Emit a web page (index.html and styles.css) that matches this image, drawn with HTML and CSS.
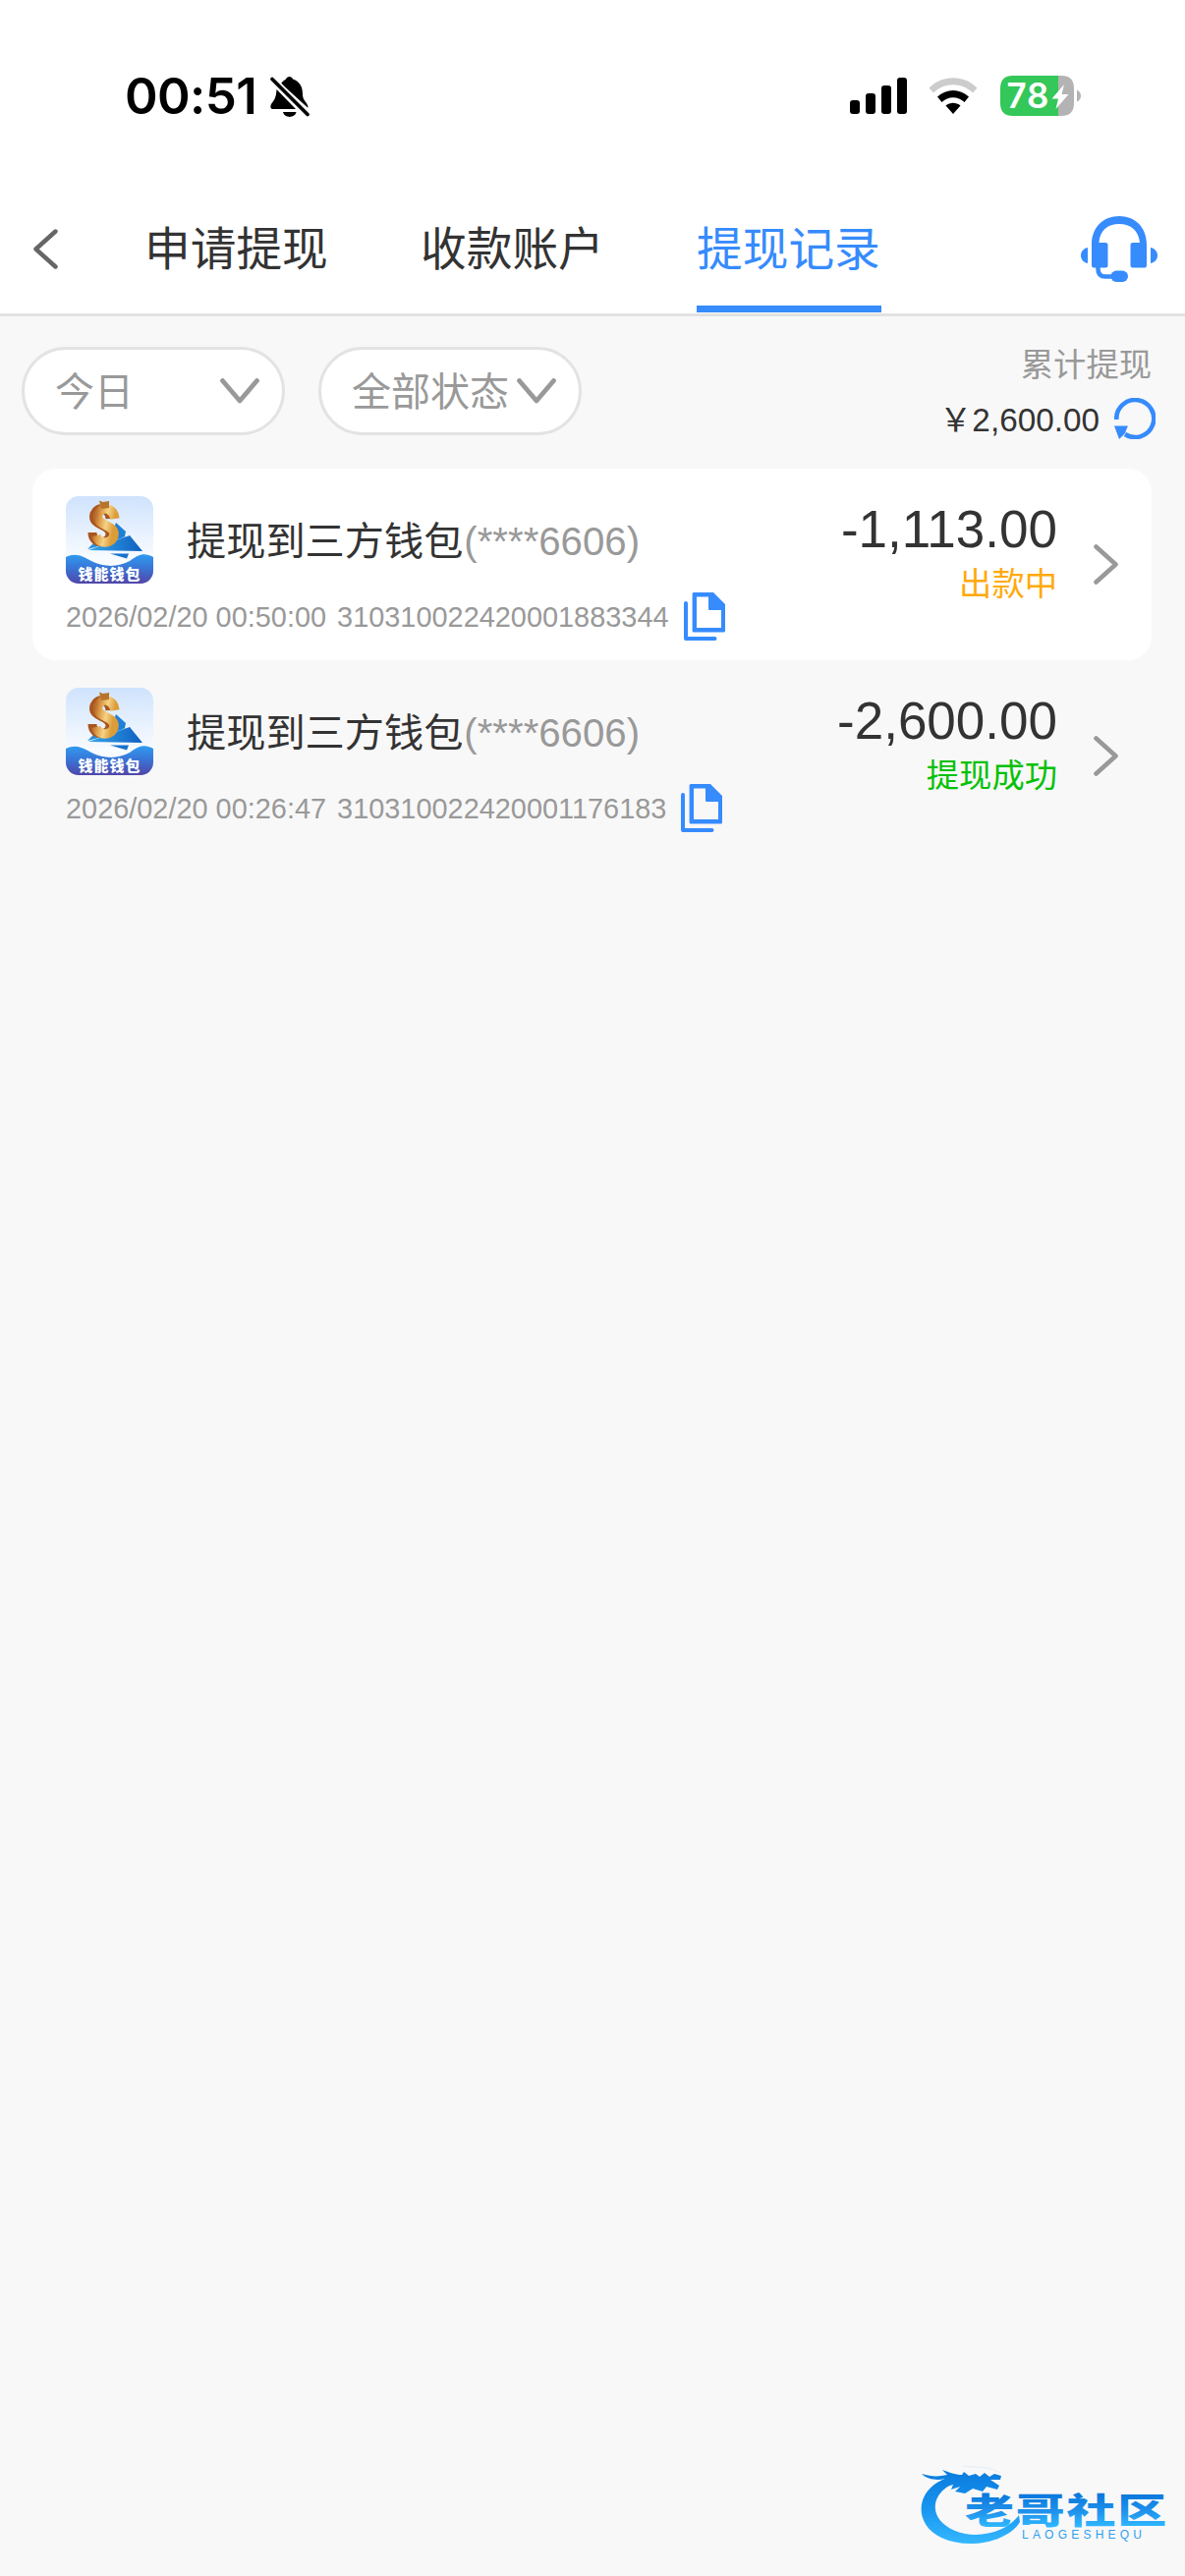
FILE: index.html
```html
<!DOCTYPE html>
<html lang="zh-CN">
<head>
  <meta charset="UTF-8">
  <title>提现记录</title>
  <link rel="stylesheet" href="styles.css">
</head>
<body>

  <!-- Shared icons -->
  <svg class="defs" width="0" height="0">
    <defs>
      <linearGradient id="sky" x1="0" y1="0" x2="0" y2="1">
        <stop offset="0" stop-color="#cfe3fd"/>
        <stop offset="0.7" stop-color="#f8fbff"/>
      </linearGradient>
      <linearGradient id="wave" x1="0" y1="0" x2="0" y2="1">
        <stop offset="0" stop-color="#2f9bf0"/>
        <stop offset="0.5" stop-color="#3a72d4"/>
        <stop offset="1" stop-color="#5146a8"/>
      </linearGradient>
      <linearGradient id="gold" x1="0" y1="0" x2="1" y2="0.3">
        <stop offset="0" stop-color="#b8692a"/>
        <stop offset="0.3" stop-color="#e0a24c"/>
        <stop offset="0.6" stop-color="#f5d286"/>
        <stop offset="1" stop-color="#dc9c38"/>
      </linearGradient>
      <linearGradient id="plane" x1="0" y1="0" x2="1" y2="0">
        <stop offset="0" stop-color="#35a6ea"/>
        <stop offset="1" stop-color="#0f5fc0"/>
      </linearGradient>
      <linearGradient id="brand" gradientUnits="userSpaceOnUse" x1="0" y1="20" x2="0" y2="100">
        <stop offset="0" stop-color="#0a78dc"/>
        <stop offset="0.5" stop-color="#1593ee"/>
        <stop offset="1" stop-color="#35b8ff"/>
      </linearGradient>
      <linearGradient id="brandText" gradientUnits="userSpaceOnUse" x1="0" y1="-31" x2="0" y2="3">
        <stop offset="0" stop-color="#0a78dc"/>
        <stop offset="0.5" stop-color="#1e90ea"/>
        <stop offset="1" stop-color="#2fb8ff"/>
      </linearGradient>
    </defs>
    <symbol id="wallet" viewBox="0 0 89 89">
      <rect width="89" height="89" fill="url(#sky)"/>
      <path d="M22 54L30 46L62 41L30 52Z" fill="#2b8fe0"/>
      <path d="M51 27L61 36L60 41L44 47Z" fill="#1f80d4"/>
      <path d="M23 55L65 40L78 56Z" fill="url(#plane)"/>
      <path d="M45 58.500L64 58.500L62 63.500Z" fill="#1673cf"/>
      <path d="M45 23C44 11 32 10 29 18C25 31 46 28 45 39C44 49 27 50 27 37" fill="none" stroke="#a9561f" stroke-width="9"/>
      <path d="M50 23C48 11 36 10 33 18C29 31 50 28 49 39C48 49 33 50 31 40" fill="none" stroke="url(#gold)" stroke-width="9.500"/>
      <path d="M34 4.500L38 6L44 5L44 12L36 13Z" fill="#b9742c"/>
      <path d="M0 62C10 57 17 61 26 66C40 73 54 72 65 66C74 59 80 57 89 62V89H0Z" fill="url(#wave)"/>
    </symbol>
    <symbol id="copy" viewBox="0 0 42 49">
      <path d="M2 11V47H31.500" fill="none" stroke="#368bfd" stroke-width="4" stroke-linecap="round" stroke-linejoin="round"/>
      <path fill-rule="evenodd" d="M10 0H30L42 12V39Q42 40.500 40.500 40.500H10Q8.600 40.500 8.600 39V1.500Q8.600 0 10 0ZM13 4.500V36H38V18H26Q25 18 25 17V4.500Z" fill="#368bfd"/>
    </symbol>
    <symbol id="next" viewBox="0 0 25 41">
      <path d="M2.500 2.500L22.500 20.500L2.500 38.500" fill="none" stroke="#999" stroke-width="4.600" stroke-linecap="round" stroke-linejoin="round"/>
    </symbol>
    <symbol id="down" viewBox="0 0 40 26">
      <path d="M2.500 2.500L20 23L37.500 2.500" fill="none" stroke="#999" stroke-width="4.800" stroke-linecap="round" stroke-linejoin="round"/>
    </symbol>
  </svg>

  <!-- Phone status bar -->
  <div class="status-bar">
    <div class="clock">
      <span class="time">00:51</span>
      <svg class="bell" viewBox="0 0 40 43">
        <path d="M11 8C13 5 15 4.500 16 3.500C17 0 22 0 23 3.500C30 6 33 11 33 19C33 26 38 27 38.500 32L38 32.500L11 8Z"/>
        <path d="M6.500 14L26 34H2.500C0 34 0 31 1 29C3 26 6 24 6.500 14Z"/>
        <path d="M13 37H26.500C25 43.500 14.500 43.500 13 37Z"/>
        <path d="M4.500 6L38 39.500" fill="none" stroke="#fff" stroke-width="7"/>
        <path d="M2 3.500L38 39.500" fill="none" stroke="#000" stroke-width="3.600" stroke-linecap="round"/>
      </svg>
    </div>
    <div class="indicators">
      <svg class="signal" viewBox="0 0 58 37">
        <rect x="0" y="23" width="10" height="14" rx="3"/>
        <rect x="16" y="16" width="10" height="21" rx="3"/>
        <rect x="32" y="8" width="10" height="29" rx="3"/>
        <rect x="48" y="0" width="10" height="37" rx="3"/>
      </svg>
      <svg class="wifi" viewBox="0 0 50 37">
        <path d="M0.500 10.500C14 -3.300 36 -3.300 49.500 10.500L45 15.500C34 4.500 16 4.500 5 15.500Z" fill="#ccc"/>
        <path d="M9 19.500C18 10.700 32 10.700 41 19.500L36.500 25C30 18.500 20 18.500 13.500 25Z"/>
        <path d="M17.500 28.500C22 24.800 28 24.800 32.500 28.500L25 37Z"/>
      </svg>
      <svg class="battery" viewBox="0 0 83 41">
        <path d="M13 0H59V41H13Q0 41 0 28V13Q0 0 13 0Z" fill="#34c759"/>
        <path d="M59 0H62Q75 0 75 13V28Q75 41 62 41H59Z" fill="#b3b3b3"/>
        <path d="M78 14.500Q82 16.500 82 20.500Q82 24.500 78 26.500Z" fill="#b3b3b3"/>
        <text x="6.500" y="33" class="battery-level" textLength="43">78</text>
        <path d="M65 9L52.500 23.500H59L56.500 34L69.500 19H62.500Z" fill="#fff"/>
      </svg>
    </div>
  </div>

  <!-- Page tabs -->
  <div class="header">
    <svg class="back" viewBox="0 0 25 41">
      <path d="M22.500 2.500L2.500 20.500L22.500 38.500" fill="none" stroke="#666" stroke-width="4.400" stroke-linecap="round" stroke-linejoin="round"/>
    </svg>
    <div class="tabs">
      <div class="tab">申请提现</div>
      <div class="tab">收款账户</div>
      <div class="tab active">提现记录</div>
    </div>
    <svg class="service" viewBox="0 0 78 67" fill="#368bfd">
      <path d="M11 29C11 11 23 0 39 0C55 0 67 11 67 29V50Q67 52.500 65 52.500H53Q50.500 52.500 50.500 50V29Q50.500 27 53 27H60C59 15 51 8 39 8C27 8 19 15 18.500 27H25Q27.500 27 27.500 29V50Q27.500 52.500 25 52.500H13Q11 52.500 11 50Z"/>
      <path d="M7 32V48C2.500 47 0 44 0 40C0 36 2.500 33 7 32ZM71 32V48C75.500 47 78 44 78 40C78 36 75.500 33 71 32Z"/>
      <path d="M17.500 51V54Q17.500 61.500 25 61.500H34" fill="none" stroke="#368bfd" stroke-width="4.500"/>
      <rect x="30.500" y="55.500" width="17.500" height="11.500" rx="5.700"/>
    </svg>
  </div>

  <!-- Filters and total -->
  <div class="filters">
    <div class="select"><span>今日</span><svg class="arrow"><use href="#down"/></svg></div>
    <div class="select"><span>全部状态</span><svg class="arrow"><use href="#down"/></svg></div>
    <div class="total">
      <div class="total-label">累计提现</div>
      <div class="total-value">
        <span>￥2,600.00</span>
        <svg class="refresh" viewBox="0 0 42 42">
          <path d="M2.300 22A19 19 0 1 1 11 37" fill="none" stroke="#368bfd" stroke-width="4.600"/>
          <path d="M0 28.500H14L12 33L11 36L5 42Z" fill="#368bfd"/>
        </svg>
      </div>
    </div>
  </div>

  <!-- Withdrawal records -->
  <div class="records">
    <div class="record white">
      <div class="info">
        <div class="title">
          <div class="wallet">
            <svg class="wallet-icon"><use href="#wallet"/></svg>
            <span class="wallet-name">钱能钱包</span>
          </div>
          <span class="name">提现到三方钱包<span class="account">(****6606)</span></span>
        </div>
        <div class="meta">
          <span>2026/02/20 00:50:00</span>
          <span>310310022420001883344</span>
          <svg class="copy"><use href="#copy"/></svg>
        </div>
      </div>
      <div class="result">
        <div class="amount">-1,113.00</div>
        <div class="state pending">出款中</div>
      </div>
      <svg class="next"><use href="#next"/></svg>
    </div>

    <div class="record">
      <div class="info">
        <div class="title">
          <div class="wallet">
            <svg class="wallet-icon"><use href="#wallet"/></svg>
            <span class="wallet-name">钱能钱包</span>
          </div>
          <span class="name">提现到三方钱包<span class="account">(****6606)</span></span>
        </div>
        <div class="meta">
          <span>2026/02/20 00:26:47</span>
          <span>310310022420001176183</span>
          <svg class="copy"><use href="#copy"/></svg>
        </div>
      </div>
      <div class="result">
        <div class="amount">-2,600.00</div>
        <div class="state success">提现成功</div>
      </div>
      <svg class="next"><use href="#next"/></svg>
    </div>
  </div>

  <!-- Community watermark -->
  <svg class="watermark" viewBox="0 0 296 120">
    <path d="M58 31C22 40 17 78 48 93C76 106 116 97 128 77L127 70C114 88 84 95 62 86C34 74 36 48 62 37Z" fill="url(#brand)"/>
    <path d="M28 28C38 31 45 31 54 29L49 24C57 27 64 29 69 29L71 26L76 30L83 28L87 31L92 27L97 31L102 28L109 30L108 34L98 34L107 40L105 44L94 41L90 46L80 43L72 48L62 46L67 41L58 44L60 39L50 42L53 36L46 38L52 33C44 35 34 34 28 28Z" fill="url(#brand)"/>
    <path d="M70 20C82 22 94 19 108 27" fill="none" stroke="#e3eef6" stroke-width="1"/>
    <text class="brand-name" transform="translate(72 79) scale(1.350 0.980)" textLength="152" fill="url(#brandText)">老哥社区</text>
    <text class="brand-latin" x="130" y="94" textLength="122">LAOGESHEQU</text>
  </svg>

</body>
</html>
```
FILE: styles.css
```css
* {
  box-sizing: border-box;
}

body {
  margin: 0;
  width: 1206px;
  height: 2622px;
  background-color: #f8f8f8;
  font-family: "Liberation Sans", "Noto Sans CJK SC", sans-serif;
  color: #333;
  position: relative;
  overflow: hidden;
}

svg {
  display: block;
  flex-shrink: 0;
}

.defs {
  position: absolute;
}

/* status bar */
.status-bar {
  height: 187px;
  padding: 77px 105px 0 127px;
  background-color: #fff;
  display: flex;
  justify-content: space-between;
  align-items: flex-start;
}

.clock {
  display: flex;
  gap: 13px;
  color: #000;
}

.time {
  width: 135px;
  font-family: Inter, sans-serif;
  font-size: 51px;
  font-weight: 600;
  letter-spacing: -0.6px;
  line-height: 42px;
  white-space: nowrap;
}

.bell {
  width: 40px;
  height: 43px;
}

.indicators {
  display: flex;
  align-items: flex-start;
}

.signal {
  width: 58px;
  height: 37px;
  margin: 2px 22px 0 0;
}

.wifi {
  width: 50px;
  height: 37px;
  margin: 2px 23px 0 0;
}

.battery {
  width: 83px;
  height: 41px;
}

.battery-level {
  font-family: Inter, sans-serif;
  font-size: 35px;
  font-weight: 600;
  fill: #fff;
}

/* header */
.header {
  height: 135px;
  padding: 0 28px 0 34px;
  background-color: #fff;
  border-bottom: 3px solid #e2e2e2;
  display: flex;
  align-items: center;
}

.back {
  width: 25px;
  height: 41px;
}

.tabs {
  display: flex;
  gap: 93px;
  margin-left: 88px;
  height: 131px;
  align-self: flex-start;
}

.tab {
  font-size: 46.7px;
  line-height: 134px;
  width: 188px;
  white-space: nowrap;
}

.active {
  color: #368bfd;
  border-bottom: 7px solid #368bfd;
}

.service {
  width: 78px;
  height: 67px;
  margin-left: auto;
}

/* filters */
.filters {
  display: flex;
  gap: 34px;
  height: 155px;
  padding: 31px 30px 0 22px;
}

.select {
  width: 268px;
  height: 90px;
  padding: 0 23px 0 31px;
  border: 3px solid #e3e3e3;
  border-radius: 45px;
  background-color: #fff;
  color: #999;
  font-size: 40px;
  display: flex;
  justify-content: space-between;
  align-items: center;
  white-space: nowrap;
}

.select span {
  padding-bottom: 4px;
}

.arrow {
  width: 40px;
  height: 26px;
}

.total {
  margin-left: auto;
}

.total-label {
  font-size: 33.3px;
  line-height: 37px;
  color: #999;
  text-align: right;
  padding-right: 4px;
}

.total-value {
  display: flex;
  align-items: center;
  gap: 15px;
  margin-top: 15px;
  height: 42px;
  font-size: 33.3px;
}

.total-value span {
  padding-bottom: 4px;
}

.refresh {
  width: 42px;
  height: 42px;
}

/* records */
.records {
  padding: 0 34px 0 33px;
}

.record {
  height: 195px;
  padding: 28px 34px 0 34px;
  border-radius: 24px;
  display: flex;
}

.white {
  background-color: #fff;
}

.title {
  display: flex;
  align-items: center;
  gap: 34px;
  height: 89px;
  font-size: 40.2px;
  white-space: nowrap;
}

.name {
  padding-bottom: 4px;
}

.wallet {
  position: relative;
  width: 89px;
  height: 89px;
  border-radius: 13px;
  overflow: hidden;
}

.wallet-icon {
  width: 89px;
  height: 89px;
}

.wallet-name {
  position: absolute;
  left: 0;
  bottom: 2px;
  width: 89px;
  font-family: "Noto Sans CJK SC", sans-serif;
  font-size: 15px;
  font-weight: 900;
  letter-spacing: 1px;
  line-height: 16px;
  text-align: center;
  color: #fff;
}

.account {
  color: #999;
  margin-left: 1px;
}

.meta {
  display: flex;
  align-items: center;
  gap: 11px;
  margin-top: 9px;
  height: 49px;
  font-size: 28.9px;
  color: #999;
  white-space: nowrap;
}

.meta span {
  padding-top: 1px;
}

.copy {
  width: 42px;
  height: 49px;
  margin-left: 4px;
}

.result {
  margin-left: auto;
  text-align: right;
}

.amount {
  font-size: 53px;
  line-height: 68px;
}

.state {
  font-size: 33.3px;
  line-height: 44px;
}

.pending {
  color: #ffaa0a;
}

.success {
  color: #07c107;
}

.next {
  width: 25px;
  height: 41px;
  margin: 49px 0 0 37px;
}

/* watermark */
.watermark {
  position: absolute;
  left: 910px;
  top: 2490px;
  width: 296px;
  height: 120px;
}

.brand-name {
  font-family: "Noto Sans CJK SC", sans-serif;
  font-size: 37px;
  font-weight: 900;
}

.brand-latin {
  font-size: 12px;
  fill: #2d9ff0;
}
```
